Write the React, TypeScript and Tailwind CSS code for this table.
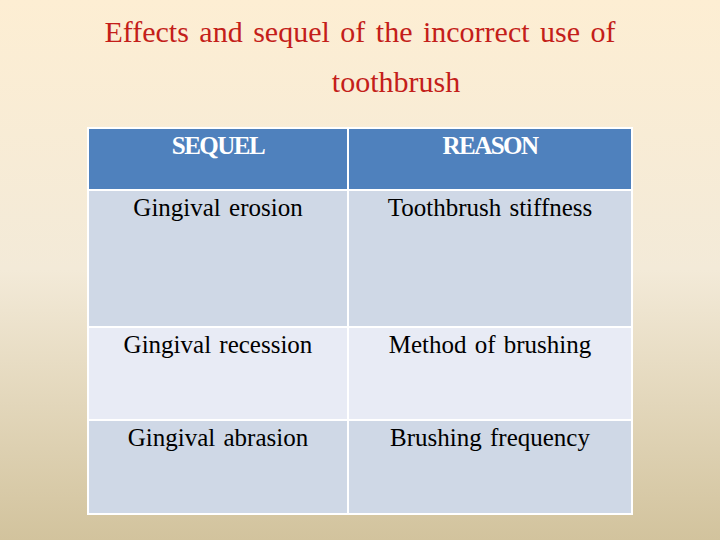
import React from "react";

const serif = '"Liberation Serif", "DejaVu Serif", serif';

const rows = [
  { sequel: "Gingival erosion", reason: "Toothbrush stiffness", h: "h-[135px]", bg: "bg-[#cfd8e6]" },
  { sequel: "Gingival recession", reason: "Method of brushing", h: "h-[91px]", bg: "bg-[#e8ebf5]" },
  { sequel: "Gingival abrasion", reason: "Brushing frequency", h: "h-[92px]", bg: "bg-[#cfd8e6]" },
];

export default function App() {
  return (
    <div
      className="flex h-[540px] w-[720px] flex-col items-center bg-gradient-to-b from-[#fdeed3] via-[#f3ead8] to-[#d2c39d]"
      style={{ fontFamily: serif }}
    >
      <h1 className="mt-[7px] text-center text-[30px] leading-[50px] text-[#c41e1a] [word-spacing:3px]">
        <div>Effects and sequel of the incorrect use of</div>
        <div className="pl-[72px]">toothbrush</div>
      </h1>
      <div className="mt-[20px] flex w-[546px] flex-col border-2 border-white bg-white" style={{ fontFamily: serif }}>
        <div className="flex h-[60px] gap-[2px]">
          <div className="flex w-[258px] justify-center bg-[#4f81bd] text-[25px] font-bold leading-[34px] tracking-[-1.5px] text-white">
            SEQUEL
          </div>
          <div className="flex flex-1 justify-center bg-[#4f81bd] text-[25px] font-bold leading-[34px] tracking-[-1.5px] text-white">
            REASON
          </div>
        </div>
        {rows.map((r) => (
          <div key={r.sequel} className={`mt-[2px] flex gap-[2px] ${r.h}`}>
            <div className={`flex w-[258px] justify-center text-[25px] leading-[34px] text-black [word-spacing:2px] ${r.bg}`}>{r.sequel}</div>
            <div className={`flex flex-1 justify-center text-[25px] leading-[34px] text-black [word-spacing:2px] ${r.bg}`}>{r.reason}</div>
          </div>
        ))}
      </div>
    </div>
  );
}
